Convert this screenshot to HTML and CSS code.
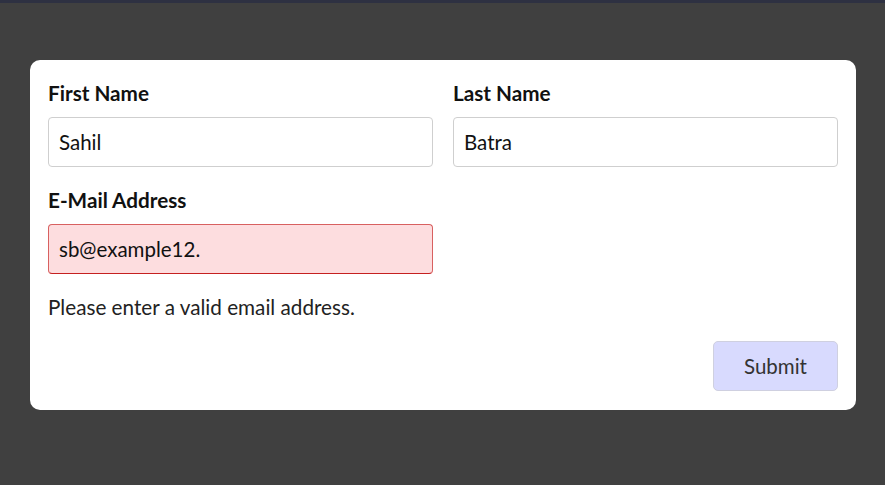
FILE: index.html
```html
<!DOCTYPE html>
<html lang="en">
<head>
<meta charset="utf-8">
<title>Form</title>
<link rel="stylesheet" href="styles.css">
</head>
<body>
<div class="topbar"></div>
<main class="page">
  <form class="card">
    <div class="row">
      <div class="field">
        <label class="label">First Name</label>
        <div class="input">Sahil</div>
      </div>
      <div class="field">
        <label class="label">Last Name</label>
        <div class="input">Batra</div>
      </div>
    </div>
    <div class="row">
      <div class="field">
        <label class="label">E-Mail Address</label>
        <div class="input invalid">sb@example12.</div>
      </div>
      <div class="field"></div>
    </div>
    <p class="error">Please enter a valid email address.</p>
    <div class="actions">
      <button type="button" class="submit">Submit</button>
    </div>
  </form>
</main>
</body>
</html>
```

FILE: styles.css
```css
html, body {
  margin: 0;
  padding: 0;
  background: #404040;
  font-family: "Lato", "Noto Sans", sans-serif;
  color: #111;
}
.topbar {
  height: 3px;
  background: #2e3142;
}
.page {
  padding: 57px 29px 0 30px;
}
.card {
  background: #fff;
  border-radius: 10px;
  padding: 18px 18px 19px 18px;
  display: flex;
  flex-direction: column;
}
.row {
  display: grid;
  grid-template-columns: 1fr 1fr;
  column-gap: 20px;
  margin-bottom: 18px;
}
.field {
  display: flex;
  flex-direction: column;
}
.label {
  font-size: 20.7px;
  font-weight: 700;
  line-height: 30px;
  margin-bottom: 9px;
  color: #111;
}
.input {
  height: 48px;
  border: 1px solid #cfcfcf;
  border-radius: 4px;
  padding: 0 10px;
  font-size: 20.5px;
  display: flex;
  align-items: center;
  color: #111;
}
.input.invalid {
  background: #fddddf;
  border-color: #d86060;
  border-bottom-color: #c52020;
}
.error {
  margin: 0 0 19px 0;
  font-size: 20.7px;
  line-height: 30px;
  color: #222;
}
.actions {
  display: flex;
  justify-content: flex-end;
}
.submit {
  width: 125px;
  height: 50px;
  background: #d8dafe;
  border: 1px solid #cfd0e0;
  border-radius: 5px;
  font-family: inherit;
  font-size: 20.5px;
  color: #333;
}
```
